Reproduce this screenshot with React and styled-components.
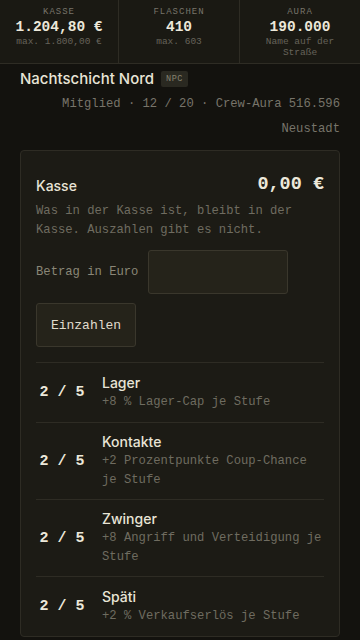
import React from 'react'
import styled, { createGlobalStyle } from 'styled-components'

const mono = `"Liberation Mono", "DejaVu Sans Mono", monospace`
const sans = `Inter, "Noto Sans", sans-serif`

const GlobalStyle = createGlobalStyle`
    * { box-sizing: border-box; }
    html, body {
        margin: 0;
        padding: 0;
        background: #13120e;
        color: #e8e4d6;
        font-family: ${sans};
    }
`

const stats = [
    { label: 'Kasse', value: '1.204,80 €', sub: 'max. 1.800,00 €' },
    { label: 'Flaschen', value: '410', sub: 'max. 603' },
    { label: 'Aura', value: '190.000', sub: 'Name auf der Straße' },
]

const perks = [
    { name: 'Lager', level: '2 / 5', text: '+8 % Lager-Cap je Stufe' },
    { name: 'Kontakte', level: '2 / 5', text: '+2 Prozentpunkte Coup-Chance je Stufe' },
    { name: 'Zwinger', level: '2 / 5', text: '+8 Angriff und Verteidigung je Stufe' },
    { name: 'Späti', level: '2 / 5', text: '+2 % Verkaufserlös je Stufe' },
]

const App = () => {
    return (
        <Page>
            <GlobalStyle />
            <StatBar>
                {stats.map((s) => (
                    <Stat key={s.label}>
                        <StatLabel>{s.label}</StatLabel>
                        <StatValue>{s.value}</StatValue>
                        <StatSub>{s.sub}</StatSub>
                    </Stat>
                ))}
            </StatBar>

            <CrewHead>
                <NameRow>
                    <CrewName>Nachtschicht Nord</CrewName>
                    <Badge>NPC</Badge>
                </NameRow>
                <Meta>Mitglied · 12 / 20 · Crew-Aura 516.596</Meta>
                <Meta>Neustadt</Meta>
            </CrewHead>

            <Card>
                <CardHead>
                    <CardTitle>Kasse</CardTitle>
                    <Amount>0,00 €</Amount>
                </CardHead>
                <Note>Was in der Kasse ist, bleibt in der Kasse. Auszahlen gibt es nicht.</Note>
                <Field>
                    <FieldLabel>Betrag in Euro</FieldLabel>
                    <Input type="text" />
                </Field>
                <Button>Einzahlen</Button>

                <PerkList>
                    {perks.map((p) => (
                        <Perk key={p.name}>
                            <Level>{p.level}</Level>
                            <PerkBody>
                                <PerkName>{p.name}</PerkName>
                                <PerkText>{p.text}</PerkText>
                            </PerkBody>
                        </Perk>
                    ))}
                </PerkList>
            </Card>
        </Page>
    )
}

const Page = styled.div`
    width: 360px;
    min-height: 640px;
    background: #13120e;
`

const StatBar = styled.div`
    display: grid;
    grid-template-columns: 119px 121px 120px;
    background: #1a1913;
    border-bottom: 1px solid #2e2c24;
`

const Stat = styled.div`
    padding: 6px 8px 5px;
    text-align: center;
    font-family: ${mono};
    border-right: 1px solid #2e2c24;
    &:last-child { border-right: none; }
`

const StatLabel = styled.div`
    font-size: 9px;
    line-height: 12px;
    letter-spacing: 1px;
    text-transform: uppercase;
    color: #77746a;
`

const StatValue = styled.div`
    font-size: 14.5px;
    line-height: 18px;
    font-weight: 700;
    color: #ece8da;
`

const StatSub = styled.div`
    font-size: 9.5px;
    line-height: 11px;
    color: #66635a;
`

const CrewHead = styled.div`
    padding: 4px 20px 0;
    display: flex;
    flex-direction: column;
    gap: 6px;
`

const NameRow = styled.div`
    display: flex;
    align-items: center;
    gap: 7px;
    height: 20px;
    margin-bottom: 1px;
`

const CrewName = styled.div`
    font-size: 15px;
    font-weight: 500;
    color: #e8e4d6;
`

const Badge = styled.span`
    font-family: ${mono};
    font-size: 8.5px;
    line-height: 16px;
    padding: 0 5px;
    margin-top: 2px;
    border-radius: 2px;
    background: #2a2921;
    color: #86836f;
    letter-spacing: 0.5px;
`

const Meta = styled.div`
    font-family: ${mono};
    font-size: 12.2px;
    line-height: 19px;
    text-align: right;
    color: #77746a;
`

const Card = styled.div`
    margin: 11px 20px 0;
    padding: 20px 15px 0;
    background: #1c1b15;
    border: 1px solid #2e2c24;
    border-radius: 4px;
`

const CardHead = styled.div`
    display: flex;
    justify-content: space-between;
    align-items: center;
    height: 27px;
`

const CardTitle = styled.div`
    font-size: 14px;
    font-weight: 500;
    color: #e8e4d6;
    margin-top: 2px;
`

const Amount = styled.div`
    font-family: ${mono};
    font-size: 18.5px;
    font-weight: 700;
    color: #ece8da;
`

const Note = styled.p`
    margin: 4px 0 0;
    font-family: ${mono};
    font-size: 12.2px;
    line-height: 19px;
    color: #6f6c60;
`

const Field = styled.div`
    display: flex;
    align-items: center;
    gap: 10px;
    margin-top: 10px;
`

const FieldLabel = styled.label`
    font-family: ${mono};
    font-size: 12.2px;
    color: #8a8777;
`

const Input = styled.input`
    width: 140px;
    height: 44px;
    background: #25231a;
    border: 1px solid #3a372c;
    border-radius: 3px;
    outline: none;
`

const Button = styled.button`
    display: block;
    margin-top: 9px;
    width: 100px;
    height: 44px;
    background: #25231a;
    border: 1px solid #3a372c;
    border-radius: 3px;
    color: #e0dccd;
    font-family: ${mono};
    font-size: 13px;
`

const PerkList = styled.div`
    margin-top: 15px;
`

const Perk = styled.div`
    display: flex;
    align-items: center;
    gap: 14px;
    min-height: 60px;
    padding: 9px 0;
    border-top: 1px solid #2e2c24;
`

const Level = styled.div`
    flex: 0 0 52px;
    text-align: center;
    font-family: ${mono};
    font-size: 15px;
    font-weight: 700;
    color: #ece8da;
`

const PerkBody = styled.div`
    flex: 1;
`

const PerkName = styled.div`
    font-size: 14px;
    font-weight: 500;
    line-height: 20px;
    color: #e8e4d6;
`

const PerkText = styled.div`
    font-family: ${mono};
    font-size: 12.2px;
    line-height: 19px;
    color: #6f6c60;
`

export default App
